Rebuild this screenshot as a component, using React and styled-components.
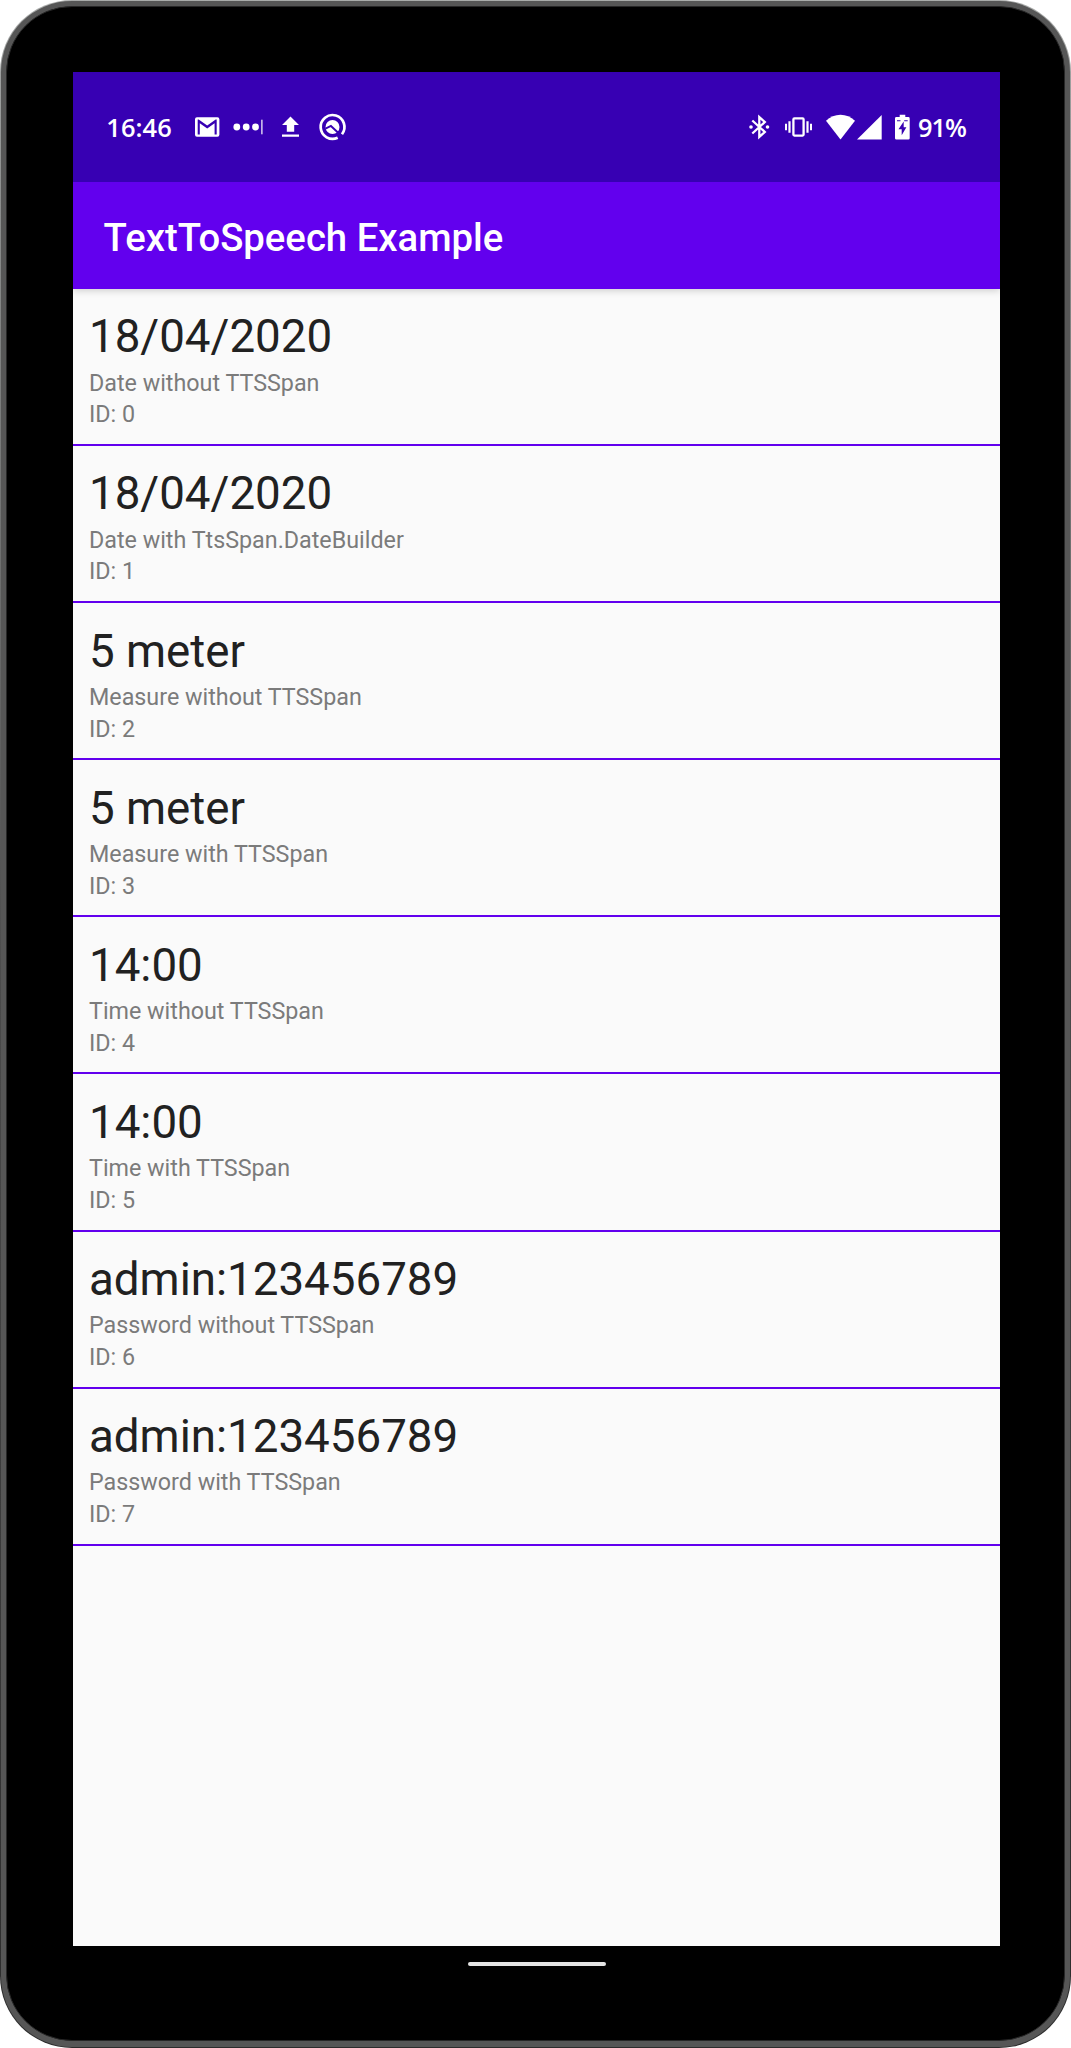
import React from "react";
import styled, { createGlobalStyle } from "styled-components";

const Global = createGlobalStyle`
  * { box-sizing: border-box; }
  body { margin: 0; background: #fff; }
`;

const Device = styled.div`
  width: 1071px;
  height: 2048px;
  padding: 1px;
  border-radius: 72px;
  background: linear-gradient(180deg, #a9abaa 0, #8b8d8c 200px, #4a4a4a 1000px, #2c2c2c 2048px);
`;

const Rim = styled.div`
  height: 2046px;
  padding: 5px;
  border-radius: 71px;
  background: #565656;
`;

const Bezel = styled.div`
  display: flex;
  flex-direction: column;
  height: 2035px;
  padding: 64.6px 0 0 66.3px;
  border-radius: 66px;
  border: 1px solid #272727;
  background: #000;
`;

const Screen = styled.main`
  display: flex;
  flex-direction: column;
  width: 926.7px;
  height: 1874.6px;
  overflow: hidden;
  background: #fafafa;
  font-family: Roboto, sans-serif;
`;

const StatusBar = styled.header`
  position: relative;
  z-index: 1;
  display: flex;
  align-items: center;
  justify-content: space-between;
  flex: 0 0 110px;
  padding: 0 34px 0 33px;
  background: #3700b3;
  color: #fff;
`;

const StatusGroup = styled.div`
  display: flex;
  align-items: center;
`;

const StatusText = styled.span`
  font: 600 25.4px/30px "Open Sans", sans-serif;
  letter-spacing: ${(p) => p.$spacing || 0}px;
  width: ${(p) => p.$width}px;
  margin-left: ${(p) => p.$gap || 0}px;
  white-space: nowrap;
`;

const Icon = styled.svg`
  display: block;
  flex: none;
  width: ${(p) => p.$w}px;
  height: 30px;
  margin-left: ${(p) => p.$gap || 0}px;
  fill: #fff;
  overflow: visible;
`;

const AppBar = styled.div`
  display: flex;
  align-items: center;
  flex: 0 0 107.2px;
  padding: 5px 30px 0 30.3px;
  background: #6200ee;
  box-shadow: 0 2px 7px rgba(0, 0, 0, 0.17);
`;

const Title = styled.h1`
  margin: 0;
  color: #fff;
  font-size: 38.3px;
  font-weight: 500;
  line-height: 46px;
`;

const List = styled.ul`
  margin: 0;
  padding: 0;
  list-style: none;
`;

const Row = styled.li`
  height: 157.14px;
  padding: 20.5px 15.7px 0;
  border-bottom: 2px solid #6200ee;
`;

const Value = styled.div`
  color: #212121;
  font-size: 45.7px;
  line-height: 56px;
`;

const Detail = styled.div`
  color: #7b7b7b;
  font-size: 23.3px;
  line-height: 31.7px;
  &:nth-child(2) { margin-top: 2.3px; }
`;

const HomeHandle = styled.div`
  width: 138px;
  height: 4px;
  margin: 15.5px 0 0 394.8px;
  border-radius: 2px;
  background: #e4e4e4;
`;

const entries = [
  ["18/04/2020", "Date without TTSSpan"],
  ["18/04/2020", "Date with TtsSpan.DateBuilder"],
  ["5 meter", "Measure without TTSSpan"],
  ["5 meter", "Measure with TTSSpan"],
  ["14:00", "Time without TTSSpan"],
  ["14:00", "Time with TTSSpan"],
  ["admin:123456789", "Password without TTSSpan"],
  ["admin:123456789", "Password with TTSSpan"],
];

const MailIcon = () => (
  <Icon $w={24.4} viewBox="0 0 24.4 30">
    <path fillRule="evenodd" d="M2 5.3h20.4a2 2 0 0 1 2 2v15.4a2 2 0 0 1-2 2H2a2 2 0 0 1-2-2V7.3a2 2 0 0 1 2-2zM2.700 7.400V22.500H4.800V11.200L12.200 16.500L19.600 11.200V22.500H21.700V7.400H20.700L12.200 13.500L3.700 7.400z" />
  </Icon>
);

const DotsIcon = () => (
  <Icon $w={30} $gap={14.3} viewBox="0 0 30 30">
    <circle cx="3.8" cy="15" r="3.4" />
    <circle cx="13.2" cy="15" r="3.4" />
    <circle cx="22.5" cy="15" r="3.4" />
    <rect x="28.3" y="7.7" width="1.2" height="14.6" />
  </Icon>
);

const UploadIcon = () => (
  <Icon $w={17} $gap={18.3} viewBox="0 0 17 30">
    <path d="M8.500 4.600L17 13H12.200V19.800H4.800V13H0zM0 22.400h17v2.300H0z" />
  </Icon>
);

const RadarIcon = () => (
  <Icon $w={27} $gap={20} viewBox="0 0 27 30">
    <path d="M18.700 25.700A11.900 11.900 0 1 1 23 22.200" fill="none" stroke="#fff" strokeWidth="2.700" />
    <circle cx="13.500" cy="15" r="7" />
    <path d="M6.500 16.700L11.900 14L20.800 22.200" fill="none" stroke="#3700b3" strokeWidth="1.900" />
  </Icon>
);

const BluetoothIcon = () => (
  <Icon $w={20.3} viewBox="0 0 20.3 30">
    <path d="M3.300 8.500L15.800 20L10.300 24.900V5.100L15.800 10L3.300 21.500" fill="none" stroke="#fff" strokeWidth="2.300" />
    <circle cx="2" cy="15" r="1.8" />
    <circle cx="18.5" cy="15" r="1.8" />
  </Icon>
);

const VibrateIcon = () => (
  <Icon $w={27} $gap={15.7} viewBox="0 0 27 30">
    <rect x="8.4" y="6.400" width="10.200" height="17.200" rx="1" fill="none" stroke="#fff" strokeWidth="2.300" />
    <path d="M0 11.700h2v6.600H0zM3.400 9.200h2.200v11.600H3.400zM21.400 9.200h2.200v11.600h-2.200zM25 11.700H27v6.600h-2z" />
  </Icon>
);

const WifiIcon = () => (
  <Icon $w={29} $gap={13.7} viewBox="0 0 29 30">
    <path d="M0 8.800C8 .8 21 .8 29 8.800L14.500 27.400z" />
  </Icon>
);

const SignalIcon = () => (
  <Icon $w={24.7} $gap={2.6} viewBox="0 0 24.7 30">
    <path d="M24.700 2.900V27.400H0z" />
  </Icon>
);

const BatteryIcon = () => (
  <Icon $w={14.7} $gap={13.3} viewBox="0 0 14.7 30">
    <path fillRule="evenodd" d="M4.700 2.700h5.600v2.400h3a1.400 1.400 0 0 1 1.400 1.400v19.700a1.400 1.400 0 0 1-1.400 1.400H1.400A1.400 1.400 0 0 1 0 26.200V6.500a1.400 1.400 0 0 1 1.400-1.400h3.300zM8.700 9.500L3.500 17.300H6.700V23.300L11.400 15.300H8.700zM2 8.200v1h3.500v-1zM9.200 8.200v1h3.500v-1z" />
  </Icon>
);

export default function App() {
  return (
    <>
      <Global />
      <Device>
        <Rim>
          <Bezel>
            <Screen>
              <StatusBar>
                <StatusGroup>
                  <StatusText $width={88.4} $spacing={0.1}>16:46</StatusText>
                  <MailIcon />
                  <DotsIcon />
                  <UploadIcon />
                  <RadarIcon />
                </StatusGroup>
                <StatusGroup>
                  <BluetoothIcon />
                  <VibrateIcon />
                  <WifiIcon />
                  <SignalIcon />
                  <BatteryIcon />
                  <StatusText $width={48} $gap={8} $spacing={-1}>91%</StatusText>
                </StatusGroup>
              </StatusBar>
              <AppBar>
                <Title>TextToSpeech Example</Title>
              </AppBar>
              <List>
                {entries.map(([value, detail], id) => (
                  <Row key={id}>
                    <Value>{value}</Value>
                    <Detail>{detail}</Detail>
                    <Detail>ID: {id}</Detail>
                  </Row>
                ))}
              </List>
            </Screen>
            <HomeHandle />
          </Bezel>
        </Rim>
      </Device>
    </>
  );
}
